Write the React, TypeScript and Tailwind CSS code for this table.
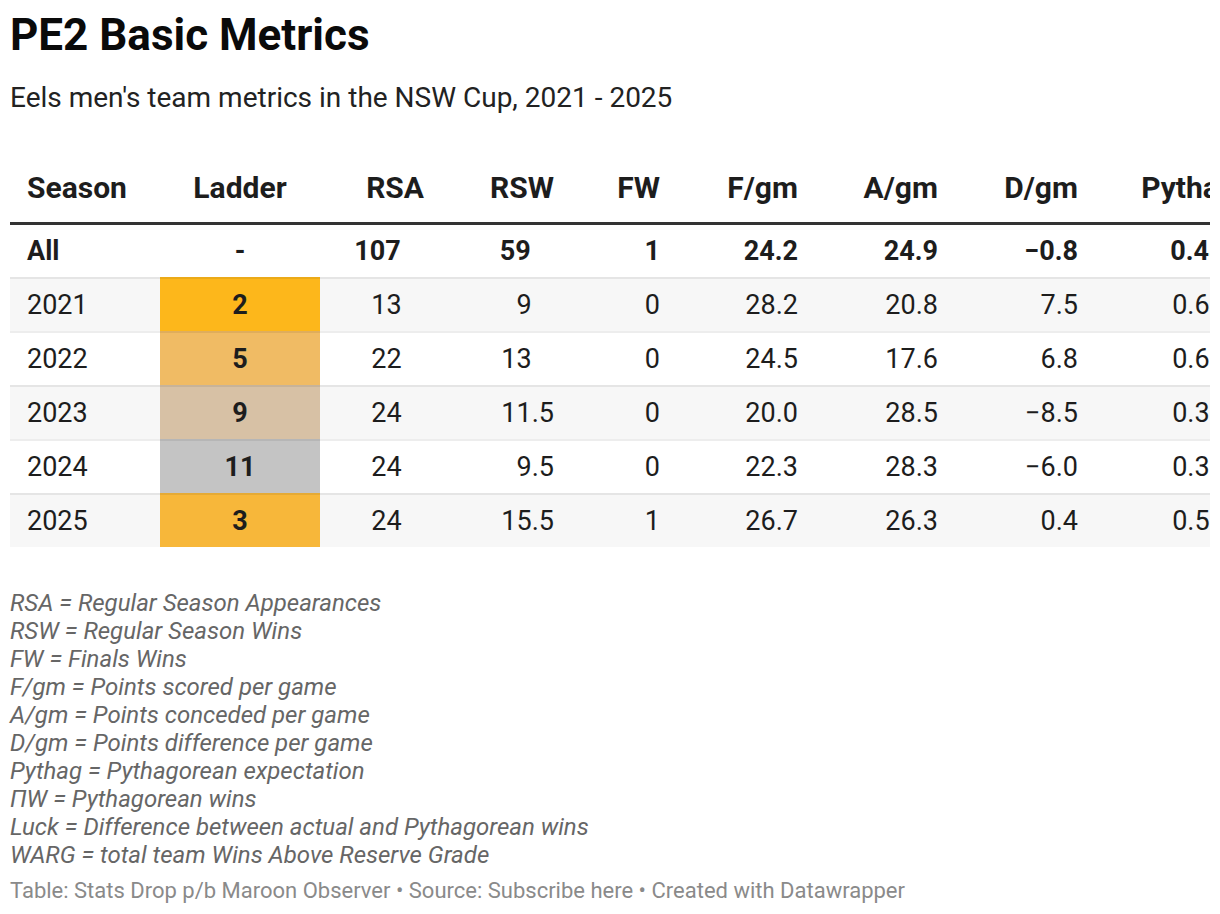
import React from "react";

type Row = {
  season: string;
  ladder: string;
  ladderBg: string;
  rsa: string;
  rsw: string;
  fw: string;
  f: string;
  a: string;
  d: string;
  pythag: string;
  pw: string;
  luck: string;
  warg: string;
};

const rows: Row[] = [
  { season: "2021", ladder: "2", ladderBg: "bg-[#fdb71b]", rsa: "13", rsw: "9", fw: "0", f: "28.2", a: "20.8", d: "7.5", pythag: "0.648", pw: "8.4", luck: "0.6", warg: "3.1" },
  { season: "2022", ladder: "5", ladderBg: "bg-[#f0bb64]", rsa: "22", rsw: "13", fw: "0", f: "24.5", a: "17.6", d: "6.8", pythag: "0.613", pw: "14.5", luck: "−1.5", warg: "2.8" },
  { season: "2023", ladder: "9", ladderBg: "bg-[#d7c1a5]", rsa: "24", rsw: "11.5", fw: "0", f: "20.0", a: "28.5", d: "−8.5", pythag: "0.315", pw: "7.9", luck: "3.6", warg: "−1.2" },
  { season: "2024", ladder: "11", ladderBg: "bg-[#c4c4c4]", rsa: "24", rsw: "9.5", fw: "0", f: "22.3", a: "28.3", d: "−6.0", pythag: "0.319", pw: "9.2", luck: "0.3", warg: "−0.4" },
  { season: "2025", ladder: "3", ladderBg: "bg-[#f7b73a]", rsa: "24", rsw: "15.5", fw: "1", f: "26.7", a: "26.3", d: "0.4", pythag: "0.512", pw: "12.2", luck: "3.3", warg: "1.9" },
];

const notes = [
  "RSA = Regular Season Appearances",
  "RSW = Regular Season Wins",
  "FW = Finals Wins",
  "F/gm = Points scored per game",
  "A/gm = Points conceded per game",
  "D/gm = Points difference per game",
  "Pythag = Pythagorean expectation",
  "ΠW = Pythagorean wins",
  "Luck = Difference between actual and Pythagorean wins",
  "WARG = total team Wins Above Reserve Grade",
];

// integers get an invisible ".0" so they line up on the decimal point
function Dec({ v }: { v: string }) {
  return (
    <>
      {v}
      {!v.includes(".") && <span className="invisible">.0</span>}
    </>
  );
}

const th = "pt-[18px] pb-[18px] text-[30px] leading-[32px] font-bold border-b-[3px] border-[#333333] whitespace-nowrap";
const td = "py-[10px] leading-[32px] whitespace-nowrap";

export default function App() {
  return (
    <div
      className="bg-white min-h-[914px] px-[10px] pt-[11px] text-[#1d1d1d]"
      style={{ fontFamily: "Roboto, 'Liberation Sans', sans-serif" }}
    >
      <h1 className="text-[44px] leading-[48px] font-bold text-[#0a0a0a]">PE2 Basic Metrics</h1>
      <p className="mt-[23px] text-[28px] leading-[32px] text-[#222222]">
        Eels men's team metrics in the NSW Cup, 2021 - 2025
      </p>

      <div className="mt-[40px] overflow-hidden">
        <table className="w-[1580px] table-fixed border-separate border-spacing-0 text-[27px]">
          <colgroup>
            <col className="w-[150px]" />
            <col className="w-[160px]" />
            <col className="w-[114px]" />
            <col className="w-[130px]" />
            <col className="w-[106px]" />
            <col className="w-[138px]" />
            <col className="w-[140px]" />
            <col className="w-[140px]" />
            <col className="w-[158px]" />
            <col className="w-[120px]" />
            <col className="w-[120px]" />
            <col className="w-[120px]" />
          </colgroup>
          <thead>
            <tr>
              <th className={`${th} text-left pl-[17px]`}>Season</th>
              <th className={`${th} text-center`}>Ladder</th>
              <th className={`${th} text-right pr-[10px]`}>RSA</th>
              <th className={`${th} text-right pr-[10px]`}>RSW</th>
              <th className={`${th} text-right pr-[10px]`}>FW</th>
              <th className={`${th} text-right pr-[10px]`}>F/gm</th>
              <th className={`${th} text-right pr-[10px]`}>A/gm</th>
              <th className={`${th} text-right pr-[10px]`}>D/gm</th>
              <th className={`${th} text-right pr-[10px]`}>Pythag</th>
              <th className={`${th} text-right pr-[10px]`}>ΠW</th>
              <th className={`${th} text-right pr-[10px]`}>Luck</th>
              <th className={`${th} text-right pr-[10px]`}>WARG</th>
            </tr>
          </thead>
          <tbody>
            <tr className="font-bold">
              <td className={`${td} text-left pl-[17px]`}>All</td>
              <td className={`${td} text-center`}>-</td>
              <td className={`${td} text-right pr-[10px]`}><Dec v="107" /></td>
              <td className={`${td} text-right pr-[10px]`}><Dec v="59" /></td>
              <td className={`${td} text-right pr-[10px]`}>1</td>
              <td className={`${td} text-right pr-[10px]`}>24.2</td>
              <td className={`${td} text-right pr-[10px]`}>24.9</td>
              <td className={`${td} text-right pr-[10px]`}>−0.8</td>
              <td className={`${td} text-right pr-[6px]`}>0.486</td>
              <td className={`${td} text-right pr-[10px]`}>52.2</td>
              <td className={`${td} text-right pr-[10px]`}>6.8</td>
              <td className={`${td} text-right pr-[10px]`}>6.2</td>
            </tr>
            {rows.map((r, i) => {
              const bg = i % 2 === 0 ? "bg-[#f7f7f7]" : "bg-white";
              const c = `${td} ${bg} border-t-2 border-black/[0.07]`;
              return (
                <tr key={r.season}>
                  <td className={`${c} text-left pl-[17px]`}>{r.season}</td>
                  <td className={`${td} ${r.ladderBg} border-t-2 border-black/[0.07] text-center font-bold`}>{r.ladder}</td>
                  <td className={`${c} text-right pr-[10px]`}><Dec v={r.rsa} /></td>
                  <td className={`${c} text-right pr-[10px]`}><Dec v={r.rsw} /></td>
                  <td className={`${c} text-right pr-[10px]`}>{r.fw}</td>
                  <td className={`${c} text-right pr-[10px]`}>{r.f}</td>
                  <td className={`${c} text-right pr-[10px]`}>{r.a}</td>
                  <td className={`${c} text-right pr-[10px]`}>{r.d}</td>
                  <td className={`${c} text-right pr-[6px]`}>{r.pythag}</td>
                  <td className={`${c} text-right pr-[10px]`}>{r.pw}</td>
                  <td className={`${c} text-right pr-[10px]`}>{r.luck}</td>
                  <td className={`${c} text-right pr-[10px]`}>{r.warg}</td>
                </tr>
              );
            })}
          </tbody>
        </table>
      </div>

      <div className="mt-[42px] text-[24px] leading-[28px] italic text-[#666666]">
        {notes.map((n) => (
          <p key={n}>{n}</p>
        ))}
      </div>

      <p className="mt-[10px] text-[22px] leading-[24px] text-[#8a8a8a]">
        Table: Stats Drop p/b Maroon Observer • Source: Subscribe here • Created with Datawrapper
      </p>
    </div>
  );
}
